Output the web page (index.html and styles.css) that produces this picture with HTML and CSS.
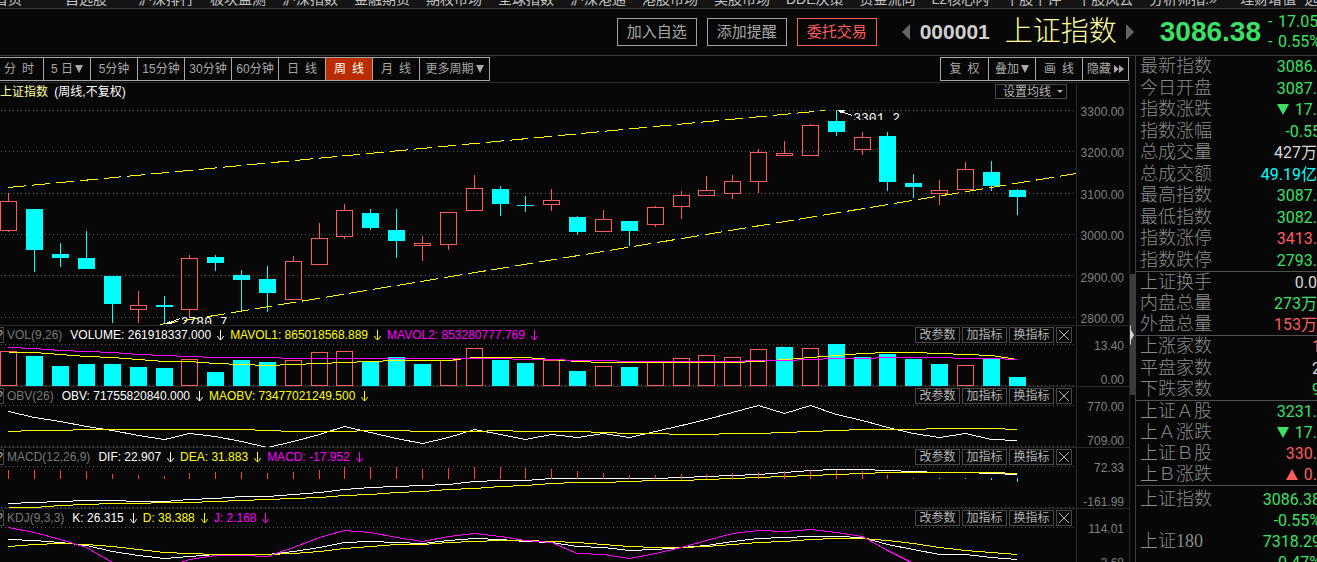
FILE: index.html
```html
<!DOCTYPE html>
<html lang="zh-CN">
<head>
<meta charset="utf-8">
<title>上证指数 000001</title>
<link rel="stylesheet" href="styles.css">
</head>
<body>
<svg class="defs" aria-hidden="true">
  <symbol id="down" viewBox="0 0 7 12"><path d="M3.5 1V11M.5 7l1 2 2 2M6.5 7l-1 2-2 2" fill="none" stroke="currentColor"/></symbol>
  <symbol id="close" viewBox="0 0 14 14"><path d="M2 2l10 10M12 2l-10 10" fill="none" stroke="currentColor"/></symbol>
</svg>

<nav class="nav">
  <a class="home" href="#">首页</a><a class="own" href="#">自选股</a><a href="#">沪深排行</a><a href="#">板块监测</a><a href="#">沪深指数</a><a href="#">金融期货</a><a href="#">期权市场</a><a href="#">全球指数</a><a href="#">沪深港通</a><a href="#">港股市场</a><a href="#">美股市场</a><a href="#">DDE决策</a><a href="#">资金流向</a><a href="#">L2核心内</a><a href="#">千股千评</a><a href="#">千股风云</a><a class="more" href="#">分析师指.»</a><a class="last" href="#">理财增值</a><a href="#">选</a>
</nav>

<header class="head">
  <div class="actions">
    <button>加入自选</button>
    <button>添加提醒</button>
    <button class="trade">委托交易</button>
  </div>
  <button class="prev" aria-label="上一个"></button>
  <strong class="code">000001</strong>
  <h1 class="name">上证指数</h1>
  <button class="next" aria-label="下一个"></button>
  <strong class="price">3086.38</strong>
  <div class="change"><span><i>-</i>17.05</span><span><i>-</i>0.55%</span></div>
</header>

<div class="body">
<main class="main">
  <div class="toolbar">
    <div class="group periods">
      <button class="first">分&ensp;时</button><button>5 日<i class="tri"></i></button><button>5分钟</button><button>15分钟</button><button>30分钟</button><button>60分钟</button><button>日&ensp;线</button><button class="active">周&ensp;线</button><button>月&ensp;线</button><button class="wide">更多周期<i class="tri"></i></button>
    </div>
    <div class="group tools">
      <button>复&ensp;权</button><button>叠加<i class="tri"></i></button><button>画&ensp;线</button><button>隐藏<i class="fwd"></i><i class="fwd"></i></button>
    </div>
  </div>

  <section class="panel">
    <div class="plot">
      <div class="title"><h2>上证指数 <span>(周线,不复权)</span></h2><button class="average">设置均线<i></i></button></div>
      <div class="stage">
        <svg id="price" class="tall" viewBox="0 0 1076 225" preserveAspectRatio="none"></svg>
        <span class="note high">3301.2</span>
        <span class="note low">2780.7</span>
      </div>
    </div>
    <div class="axis prices"><span>3300.00</span><span>3200.00</span><span>3100.00</span><span>3000.00</span><span>2900.00</span><span>2800.00</span></div>
  </section>

  <section class="panel">
    <div class="plot">
      <div class="bar"><button class="help">?</button>
        <div class="legend"><span class="dim">VOL(9,26)</span><span>VOLUME: 261918337.000</span><svg><use href="#down"/></svg><span class="y">MAVOL1: 865018568.889</span><svg class="y"><use href="#down"/></svg><span class="m">MAVOL2: 853280777.769</span><svg class="m"><use href="#down"/></svg></div>
        <div class="edit"><button>改参数</button><button>加指标</button><button>换指标</button><button class="x" aria-label="关闭"><svg><use href="#close"/></svg></button></div>
      </div>
      <svg id="volume" class="short" viewBox="0 0 1076 42" preserveAspectRatio="none"></svg>
    </div>
    <div class="axis"><span>13.40</span><span>0.00</span></div>
  </section>

  <section class="panel">
    <div class="plot">
      <div class="bar"><button class="help">?</button>
        <div class="legend"><span class="dim">OBV(26)</span><span>OBV: 71755820840.000</span><svg><use href="#down"/></svg><span class="y">MAOBV: 73477021249.500</span><svg class="y"><use href="#down"/></svg></div>
        <div class="edit"><button>改参数</button><button>加指标</button><button>换指标</button><button class="x" aria-label="关闭"><svg><use href="#close"/></svg></button></div>
      </div>
      <svg id="obv" class="short" viewBox="0 0 1076 42" preserveAspectRatio="none"></svg>
    </div>
    <div class="axis"><span>770.00</span><span>709.00</span></div>
  </section>

  <section class="panel">
    <div class="plot">
      <div class="bar"><button class="help">?</button>
        <div class="legend"><span class="dim">MACD(12,26,9)</span><span>DIF: 22.907</span><svg><use href="#down"/></svg><span class="y">DEA: 31.883</span><svg class="y"><use href="#down"/></svg><span class="m">MACD: -17.952</span><svg class="m"><use href="#down"/></svg></div>
        <div class="edit"><button>改参数</button><button>加指标</button><button>换指标</button><button class="x" aria-label="关闭"><svg><use href="#close"/></svg></button></div>
      </div>
      <svg id="macd" class="short" viewBox="0 0 1076 42" preserveAspectRatio="none"></svg>
    </div>
    <div class="axis"><span>72.33</span><span>-161.99</span></div>
  </section>

  <section class="panel">
    <div class="plot">
      <div class="bar"><button class="help">?</button>
        <div class="legend"><span class="dim">KDJ(9,3,3)</span><span>K: 26.315</span><svg><use href="#down"/></svg><span class="y">D: 38.388</span><svg class="y"><use href="#down"/></svg><span class="m">J: 2.168</span><svg class="m"><use href="#down"/></svg></div>
        <div class="edit"><button>改参数</button><button>加指标</button><button>换指标</button><button class="x" aria-label="关闭"><svg><use href="#close"/></svg></button></div>
      </div>
      <svg id="kdj" class="short" viewBox="0 0 1076 42" preserveAspectRatio="none"></svg>
    </div>
    <div class="axis"><span>114.01</span><span>3.68</span></div>
  </section>
</main>

<div class="strip"><button class="thumb" aria-label="展开"><svg viewBox="0 0 4 20"><path d="M0 0L1 1V5L4 10 1 15V19L0 20Z" fill="#d8d8d8"/></svg></button></div>

<aside class="side">
  <table class="up">
    <tr><th>最新指数</th><td class="g">3086.</td></tr>
    <tr><th>今日开盘</th><td class="g">3087.</td></tr>
    <tr><th>指数涨跌</th><td class="g"><i class="dn"></i>17.</td></tr>
    <tr><th>指数涨幅</th><td class="g"><span class="cut">-0.55</span></td></tr>
    <tr><th>总成交量</th><td class="w">427万</td></tr>
    <tr><th>总成交额</th><td class="c">49.19亿</td></tr>
    <tr><th>最高指数</th><td class="g">3087.</td></tr>
    <tr><th>最低指数</th><td class="g">3082.</td></tr>
    <tr><th>指数涨停</th><td class="r">3413.</td></tr>
    <tr><th>指数跌停</th><td class="g">2793.</td></tr>
  </table>
  <table>
    <tr><th>上证换手</th><td class="w">0.0</td></tr>
    <tr><th>内盘总量</th><td class="g">273万</td></tr>
    <tr><th>外盘总量</th><td class="r">153万</td></tr>
  </table>
  <table class="up">
    <tr><th>上涨家数</th><td class="r"><span class="cut">1</span></td></tr>
    <tr><th>平盘家数</th><td class="w"><span class="cut">2</span></td></tr>
    <tr><th>下跌家数</th><td class="g"><span class="cut">9</span></td></tr>
  </table>
  <table>
    <tr><th>上证Ａ股</th><td class="g">3231.</td></tr>
    <tr><th>上Ａ涨跌</th><td class="g"><i class="dn"></i>17.</td></tr>
    <tr><th>上证Ｂ股</th><td class="r">330.</td></tr>
    <tr><th>上Ｂ涨跌</th><td class="r"><i class="rise"></i>0.</td></tr>
  </table>
  <table class="indices">
    <tr><th>上证指数</th><td class="g"><span class="cut">3086.38</span></td></tr>
    <tr><th></th><td class="g"><span class="cut">-0.55%</span></td></tr>
    <tr><th>上证180</th><td class="g"><span class="cut">7318.29</span></td></tr>
    <tr><th></th><td class="g"><span class="cut">-0.47%</span></td></tr>
  </table>
</aside>
</div>
<script src="charts.js"></script>
</body>
</html>
```
FILE: styles.css
```css
* { box-sizing: border-box; }
body {
  margin: 0;
  height: 100vh;
  overflow: hidden;
  display: flex;
  flex-direction: column;
  background: #070707;
  color: #fff;
  font: 12px/16px "Liberation Sans", "Noto Sans CJK SC", sans-serif;
}
button { margin: 0; padding: 0; border: 0; background: none; color: inherit; font: inherit; white-space: nowrap; }
h1, h2 { margin: 0; font-weight: normal; }
i { font-style: normal; }
.defs { display: none; }

.nav {
  flex: none;
  display: flex;
  align-items: flex-end;
  gap: 16px;
  height: 9px;
  overflow: hidden;
  background: #141414;
  border-bottom: 1px solid #3c3c3c;
  font-size: 14px;
  line-height: 18px;
}
.nav a { flex: none; min-width: 56px; color: #c4c4c4; text-decoration: none; }
.nav .home { min-width: 0; margin: 0 27px 0 -6px; }
.nav .own { min-width: 0; margin-right: 15px; }
.nav .more { min-width: 75px; }
.nav .last { margin-right: -8px; }

.head {
  flex: none;
  display: flex;
  align-items: center;
  justify-content: flex-end;
  height: 47px;
  border-bottom: 1px solid #3c3c3c;
}
.actions { display: flex; gap: 10px; margin-right: 25px; }
.actions button { width: 80px; height: 28px; border: 1px solid #a0a0a0; color: #a8a8a8; font-size: 15px; }
.actions .trade { border-color: #ff5c5c; color: #ff5c5c; }
.prev, .next { border: 8px solid transparent; border-width: 8px 0; }
.prev { border-right: 8px solid #646464; margin-right: 10px; }
.next { border-left: 8px solid #646464; margin: 0 26px 0 9px; }
.code { margin-right: 15px; color: #d0d0d0; font-size: 21px; }
.name { color: #ffff9c; font-size: 28px; line-height: 40px; font-weight: 300; }
.price { color: #3be064; font-size: 28px; margin-right: 7px; }
.change { display: grid; width: 49px; color: #3be064; font: 16px/20px Roboto, sans-serif; }
.change span { display: flex; justify-content: flex-start; white-space: nowrap; }
.change i { width: 10px; }

.body { flex: 1; min-height: 0; display: flex; }
.main { flex: 1; min-width: 0; overflow: hidden; }
.toolbar { display: flex; justify-content: space-between; padding: 1px 1px 1px 0; }
.group { display: flex; }
.group button {
  display: flex;
  align-items: center;
  justify-content: center;
  width: 47px;
  height: 24px;
  border: 1px solid #a8a8a8;
  border-left: 0;
  color: #a8a8a8;
}
.group .first { width: 44px; padding-right: 5px; }
.group .wide { width: 70px; }
.group .active { background: #b82c00; color: #fff; }
.tools button:first-child { width: 49px; border-left: 1px solid #a8a8a8; }
.tools button:last-child { width: 46px; }
.tri { margin-left: 2px; border: 4px solid transparent; border-top: 8px solid #a8a8a8; border-bottom: 0; }
.fwd { border: 4px solid transparent; border-left: 5px solid #a8a8a8; border-right: 0; }
.fwd:first-of-type { margin-left: 3px; }

.panel { display: flex; border-top: 1px solid #282828; border-right: 1px solid #282828; }
.plot { flex: 1; min-width: 0; }
.plot svg { display: block; }
.title { display: flex; justify-content: space-between; align-items: center; height: 17px; padding-right: 9px; }
.title h2 { font-size: 12px; color: #ffff9c; white-space: pre; }
.title h2 span { color: #fff; margin-left: 3px; }
.average { display: flex; align-items: center; justify-content: center; gap: 6px; width: 72px; height: 15px; padding-left: 4px; border: 1px solid #484848; color: #b4b4b4; }
.average i { border: 3px solid transparent; border-top-color: #b4b4b4; border-bottom: 0; }
.stage { position: relative; }
.tall { width: 100%; height: 225px; }
.short { width: 100%; height: 42px; }
.note { position: absolute; height: 7px; overflow: hidden; font: 13px/12px "Liberation Mono", monospace; }
.high { left: 79.3%; top: 13px; }
.low { left: 16.8%; top: 217px; }

.bar { display: flex; align-items: center; height: 18px; padding-right: 4px; }
.help { width: 4px; height: 16px; border: 1px solid #484848; border-left: 0; color: #b4b4b4; overflow: hidden; line-height: 14px; direction: rtl; }
.legend { flex: 1; display: flex; align-items: center; gap: 6px; padding-left: 3px; white-space: nowrap; }
.legend svg { width: 7px; height: 12px; }
.legend .dim { color: #787878; margin-right: 2px; }
.y { color: #ff0; }
.m { color: #f0f; }
.edit { display: flex; gap: 2px; }
.edit button { width: 45px; height: 16px; border: 1px solid #484848; color: #b4b4b4; line-height: 14px; }
.edit .x { width: 16px; }
.x svg { width: 14px; height: 14px; }

.axis {
  flex: none;
  display: flex;
  flex-direction: column;
  justify-content: space-between;
  width: 53px;
  padding: 14px 5px 0 0;
  border-left: 1px solid #282828;
  color: #808080;
  line-height: 12px;
  text-align: right;
}
.prices { padding: 23px 5px 0 0; }

.strip { flex: none; width: 5px; padding-top: 218px; }
.thumb { display: block; width: 5px; height: 121px; padding-top: 1px; background: #3c3c3c; }
.thumb svg { display: block; width: 4px; height: 20px; }

.side { flex: none; width: 182px; overflow: hidden; border-left: 1px solid #3c3c3c; }
.side table { width: 100%; border-spacing: 0; border-bottom: 1px solid #505050; }
.side tr { height: 21px; }
.up tr:nth-child(even) { height: 22px; }
.side th, .side td { padding: 0; line-height: 21px; white-space: nowrap; }
.side th { padding-left: 4px; text-align: left; font: 300 18px/21px "Liberation Serif", "Noto Sans CJK SC", serif; color: #8c8c8c; }
.side td { text-align: right; font: 16px/21px Roboto, "Noto Sans CJK SC", sans-serif; }
.cut { margin-right: -4px; }
.side .indices { border: 0; margin-top: 3px; }
.indices tr { height: 20px; }
.g { color: #3be064; }
.r { color: #ff5c5c; }
.w { color: #d8d8d8; }
.c { color: #0ff; }
.dn, .rise { display: inline-block; margin-right: 6px; border: 6px solid transparent; }
.dn { border-top: 11px solid #3be064; border-bottom: 0; }
.rise { border-bottom: 11px solid #ff5c5c; border-top: 0; }
```
FILE: charts.js
```js
const STEP = 25.852;
const RED = '#ff5c5c', CYAN = '#00ffff', YELLOW = '#ffff00', MAGENTA = '#ff00ff', WHITE = '#ffffff';
const xAt = i => Math.floor(8.91 + STEP * i);

// direction, wick top, wick bottom, body top, body bottom
const candles = [
  'r 93 132 101 131', 'c 109 172 109 150', 'c 143 167 154 158', 'c 131 169 158 169', 'c 176 223 176 204',
  'r 191 223 205 210', 'c 196 224 205 207', 'r 155 218 158 210', 'c 155 171 157 163', 'c 170 211 175 180',
  'c 166 212 179 193', 'r 156 200 161 200', 'r 123 165 138 165', 'r 104 139 110 137', 'c 109 130 113 128',
  'c 109 158 130 141', 'r 136 161 143 146', 'r 112 150 112 145', 'r 75 111 88 111', 'c 86 116 89 104',
  'c 96 112 105 106', 'r 89 111 100 105', 'c 116 135 117 132', 'r 110 132 119 132', 'c 121 146 121 131',
  'r 106 127 107 125', 'r 91 119 95 107', 'r 76 96 90 96', 'r 75 99 81 94', 'r 49 93 52 82',
  'r 41 56 53 56', 'r 24 56 25 56', 'c 10 36 21 32', 'r 32 55 37 50', 'c 32 91 36 82',
  'c 74 98 83 87', 'r 80 105 90 94', 'r 62 90 69 90', 'c 61 91 72 86', 'c 89 115 90 97'
].map(s => s.split(' ').map((v, k) => k ? +v : v));

const volumes = 'r7 c12 c22 c20 c20 c23 c24 r15 c28 c16 c18 r16 r8 r7 c17 c13 c20 r16 r4 c16 c19 r16 c27 r22 c23 r18 r14 r11 r13 r5 c3 r4 c0 c13 c10 c15 c20 r21 c15 c33'.split(' ');

const rect = (x, y, w, h, fill) => `<rect x="${x}" y="${y}" width="${w}" height="${h}" fill="${fill}"/>`;
const box = (x, y, w, h) => `<rect x="${x + .5}" y="${y + .5}" width="${w - 1}" height="${h - 1}" fill="none" stroke="${RED}"/>`;
const grid = ys => ys.map(y => `<path d="M1 ${y + .5}H1074" stroke="#585858" stroke-dasharray="1 3"/>`).join('');
const line = (color, text) => `<polyline fill="none" stroke="${color}" points="${text.split(' ').map((y, i) => `${xAt(i) + .5},${+y + .5}`).join(' ')}"/>`;
const draw = (id, parts) => {
  const svg = document.getElementById(id);
  svg.setAttribute('shape-rendering', 'crispEdges');
  svg.innerHTML = parts.join('');
};

draw('price', [
  grid([10, 51, 93, 134, 175, 217]),
  candles.map(([kind, high, low, top, bottom], i) => {
    const x = xAt(i);
    if (kind === 'c') return rect(x, high, 1, low - high, CYAN) + rect(x - 8, top, 17, bottom - top, CYAN);
    return rect(x, high, 1, top - high, RED) + rect(x, bottom, 1, low - bottom, RED) + box(x - 8, top, 17, bottom - top);
  }).join(''),
  `<path d="M8 87.5L825 10.5M160 224.5L1076 73.5" stroke="${YELLOW}" stroke-dasharray="18 6"/>`,
  `<path d="M838 10.5L852 15.5M166 224L180 218.5" stroke="${WHITE}"/>`,
  `<path d="M837 10H845V11L841 13ZM165 224L170 221L172 224Z" fill="${WHITE}"/>`
]);

draw('volume', [
  grid([0, 41]),
  volumes.map((v, i) => {
    const x = xAt(i) - 8, y = +v.slice(1);
    return v[0] === 'c' ? rect(x, y, 17, 42 - y, CYAN) : box(x, y, 17, 42 - y);
  }).join(''),
  line(YELLOW, '8 8 10 12 13 15 17 17 19 20 21 20 19 18 17 16 16 16 13 13 13 15 17 18 18 18 18 18 18 17 15 13 11 9 8 8 9 10 11 15'),
  line(MAGENTA, '3 4 6 7 8 10 11 12 13 13 13 14 14 14 14 14 14 14 14 14 15 15 16 16 17 17 17 17 17 16 16 15 14 14 13 13 13 14 14 15')
]);

draw('obv', [
  grid([0, 41]),
  line(WHITE, '6 12 16 21 25 30 34 28 31 36 42 36 29 21 27 33 38 32 24 29 34 29 32 28 32 26 20 14 7 0 8 0 9 15 22 28 32 28 34 35'),
  line(YELLOW, '26 25 25 24 24 24 24 24 24 24 25 26 26 26 25 25 26 26 26 25 26 26 26 27 28 28 29 29 28 28 27 26 25 24 24 24 23 23 23 24')
]);

const bars = [4, 4, 4, 5, 8, 9, 10, 7, 6, 6, 7, 6, 4, 1, 1, 1, 3, 2, 1, 1, 2, 3, 5, 7, 9, 9, 8, 8, 7, 6, 5, 4, 4, 5, 9, 12];
draw('macd', [
  grid([0, 41]),
  line(WHITE, '37 36 35 34 34 35 35 33 32 30 30 28 26 23 21 20 19 18 15 14 14 12 12 12 12 12 11 10 9 8 6 4 3 3 4 5 6 6 7 8'),
  line(YELLOW, '41 41 39 38 37 37 36 36 35 34 33 32 31 29 28 26 25 23 22 20 19 17 16 16 15 14 14 13 12 11 10 9 8 7 6 6 6 6 6 7'),
  bars.map((y, i) => rect(xAt(i), y, 1, 13 - y, '#ff3c3c')).join(''),
  [1, 1, 2, 4].map((h, k) => rect(xAt(36 + k), 12, 1, h, CYAN)).join('')
]);

draw('kdj', [
  grid([0]),
  line(WHITE, '12 13 15 18 24 28 31 29 27 27 27 24 20 15 14 15 16 13 11 12 14 15 19 20 23 22 20 18 14 11 10 9 9 10 17 22 27 27 30 32'),
  line(YELLOW, '19 17 16 17 19 22 25 26 27 27 27 26 24 21 19 17 17 15 14 13 13 14 15 17 19 20 20 19 17 15 14 12 11 11 13 16 20 23 25 27'),
  line(MAGENTA, '0 5 12 20 35 43 41 32 28 28 29 20 10 3 5 10 14 9 6 9 13 15 26 27 31 26 20 13 6 3 4 2 5 9 23 36 49 53 53 53')
]);
```
